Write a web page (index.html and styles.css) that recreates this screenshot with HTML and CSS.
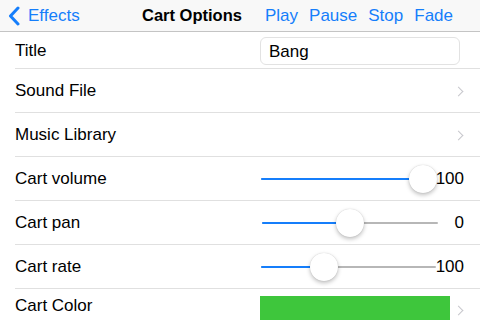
FILE: index.html
```html
<!DOCTYPE html>
<html lang="en">
<head>
    <meta charset="UTF-8">
    <title>Cart Options</title>
    <link rel="stylesheet" href="styles.css">
</head>
<body>
    <div class="navbar">
        <a class="back-btn">
            <svg class="back-chevron" width="12" height="20" viewBox="0 0 12 20">
                <path d="M10 2 L2.5 10 L10 18" fill="none" stroke="#157efb" stroke-width="3" stroke-linecap="round" stroke-linejoin="round"/>
            </svg>
            <span>Effects</span>
        </a>
        <div class="nav-title">Cart Options</div>
        <div class="nav-actions">
            <a>Play</a>
            <a>Pause</a>
            <a>Stop</a>
            <a>Fade</a>
        </div>
    </div>

    <div class="table">
        <div class="row first-row">
            <div class="row-label">Title</div>
            <div class="text-field">Bang</div>
        </div>
        <div class="row">
            <div class="row-label">Sound File</div>
            <span class="chevron"></span>
        </div>
        <div class="row">
            <div class="row-label">Music Library</div>
            <span class="chevron"></span>
        </div>
        <div class="row">
            <div class="row-label">Cart volume</div>
            <div class="slider">
                <div class="track"><div class="fill" style="width: 93%"></div></div>
                <div class="thumb" style="left: 93%"></div>
            </div>
            <div class="slider-value">100</div>
        </div>
        <div class="row">
            <div class="row-label">Cart pan</div>
            <div class="slider">
                <div class="track"><div class="fill" style="width: 50%"></div></div>
                <div class="thumb" style="left: 50%"></div>
            </div>
            <div class="slider-value">0</div>
        </div>
        <div class="row">
            <div class="row-label">Cart rate</div>
            <div class="slider">
                <div class="track"><div class="fill" style="width: 36%"></div></div>
                <div class="thumb" style="left: 36%"></div>
            </div>
            <div class="slider-value">100</div>
        </div>
        <div class="row last-row">
            <div class="row-label">Cart Color</div>
            <div class="color-swatch"></div>
            <span class="chevron"></span>
        </div>
    </div>
</body>
</html>
```

FILE: styles.css
```css
body {
    font-family: "Liberation Sans", Arial, sans-serif;
    margin: 0;
    padding: 0;
    width: 480px;
    height: 320px;
    overflow: hidden;
    background-color: #fff;
    color: #000;
}

.navbar {
    display: flex;
    align-items: center;
    height: 32px;
    background-color: #f8f8f8;
    border-bottom: 1px solid #c4c4c4;
    box-sizing: border-box;
    font-size: 17px;
}

.back-btn {
    display: flex;
    align-items: center;
    color: #157efb;
    padding-left: 8px;
    width: 134px;
}

.back-chevron {
    margin-right: 8px;
}

.nav-title {
    font-weight: bold;
    font-size: 16.5px;
    width: 123px;
}

.nav-actions {
    display: flex;
    gap: 11px;
    color: #157efb;
}

.table {
    background-color: #fff;
}

.row {
    display: flex;
    align-items: center;
    height: 44px;
    margin-left: 15px;
    padding-right: 16px;
    padding-top: 1px;
    border-bottom: 1px solid #e0e0e0;
    box-sizing: border-box;
    font-size: 17px;
}

.first-row {
    height: 37px;
}

.last-row {
    border-bottom: none;
    align-items: flex-start;
    padding-top: 7px;
}

.row-label {
    width: 245px;
}

.text-field {
    width: 200px;
    height: 28px;
    line-height: 28px;
    padding-left: 8px;
    border: 1px solid #e2e2e2;
    border-radius: 6px;
    box-sizing: border-box;
    margin-top: 1px;
}

.chevron {
    margin-left: auto;
    margin-right: 2px;
    width: 6px;
    height: 6px;
    border-top: 1.5px solid #c7c7cc;
    border-right: 1.5px solid #c7c7cc;
    transform: rotate(45deg);
}

.slider {
    position: relative;
    width: 176px;
    margin-left: 2px;
    height: 28px;
    display: flex;
    align-items: center;
}

.track {
    width: 100%;
    height: 2px;
    background-color: #b7b7b7;
    border-radius: 1px;
}

.fill {
    height: 100%;
    background-color: #157efb;
    border-radius: 1px;
}

.thumb {
    position: absolute;
    top: 0;
    width: 28px;
    height: 28px;
    margin-left: -14px;
    border-radius: 50%;
    background-color: #fff;
    box-shadow: 0 2px 4px rgba(0, 0, 0, 0.25), 0 0 1px rgba(0, 0, 0, 0.2);
}

.slider-value {
    margin-left: auto;
}

.color-swatch {
    width: 190px;
    height: 30px;
    background-color: #3ec63c;
}

.last-row .chevron {
    margin-top: 11px;
}
```
